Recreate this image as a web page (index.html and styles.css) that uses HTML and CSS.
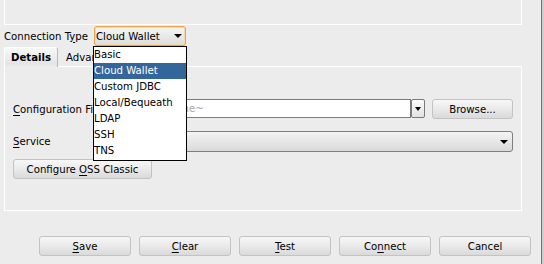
FILE: index.html
```html
<!DOCTYPE html>
<html>
<head>
<meta charset="utf-8">
<link rel="stylesheet" href="styles.css">
</head>
<body>
<div class="screen">
  <div class="main">
    <div class="top-panel"></div>
    <div class="conn-row">
      <span class="label conn-label">Connection T<u>y</u>pe</span>
      <div class="combo focus"><span class="combo-text">Cloud Wallet</span><span class="arrow"></span></div>
    </div>
    <div class="tabs">
      <div class="tab active">Details</div>
      <div class="tab">Advanced</div>
    </div>
    <div class="tab-panel">
      <div class="form-row">
        <span class="label field-label"><u>C</u>onfiguration File</span>
        <div class="file-field"><span class="ghost">Wallet file name~</span></div>
        <div class="drop-btn"><span class="arrow"></span></div>
        <div class="btn browse"><span>Browse...</span></div>
      </div>
      <div class="form-row service-row">
        <span class="label field-label"><u>S</u>ervice</span>
        <div class="combo service"><span class="combo-text"></span><span class="arrow"></span></div>
      </div>
      <div class="btn oss"><span>Configure <u>O</u>SS Classic</span></div>
    </div>
    <div class="actions">
      <div class="btn action"><span><u>S</u>ave</span></div>
      <div class="btn action"><span><u>C</u>lear</span></div>
      <div class="btn action"><span><u>T</u>est</span></div>
      <div class="btn action"><span>Co<u>n</u>nect</span></div>
      <div class="btn action"><span>Cancel</span></div>
    </div>
  </div>
  <div class="edge"></div>
  <ul class="popup">
    <li>Basic</li>
    <li class="selected">Cloud Wallet</li>
    <li>Custom JDBC</li>
    <li>Local/Bequeath</li>
    <li>LDAP</li>
    <li>SSH</li>
    <li>TNS</li>
  </ul>
</div>
</body>
</html>
```

FILE: styles.css
```css
* { box-sizing: border-box; }
html, body { margin: 0; padding: 0; }
body {
  background: #ececec;
  font-family: "DejaVu Sans Condensed", "DejaVu Sans", sans-serif;
  font-size: 11.3px;
  color: #000;
}
u { text-decoration: underline; text-underline-offset: 2px; }

.screen {
  position: relative;
  width: 544px;
  height: 264px;
  display: flex;
  overflow: hidden;
}
.main {
  width: 541px;
  flex-shrink: 0;
  padding-left: 4px;
  padding-right: 19px;
  display: flex;
  flex-direction: column;
}
.edge {
  width: 3px;
  flex-shrink: 0;
  border-left: 1px solid #3a7dc2;
  background: #cfcfcf;
}

.top-panel {
  height: 25px;
  border: 1px solid #fff;
  border-top: none;
}

.conn-row {
  margin-top: 1px;
  height: 20px;
  display: flex;
  align-items: center;
}
.conn-label { width: 90px; }

.combo {
  position: relative;
  display: flex;
  align-items: center;
  height: 20px;
  border: 1px solid #8e8f8f;
  border-radius: 3px;
  background: linear-gradient(#f6f6f6, #dcdcdc);
  padding-left: 1px;
}
.combo.focus {
  width: 92px;
  border-color: #e9a548;
  box-shadow: inset 0 0 0 1px #f7d9a6;
}
.combo-text { flex: 1; white-space: nowrap; }
.arrow {
  display: block;
  width: 0;
  height: 0;
  border-left: 4px solid transparent;
  border-right: 4px solid transparent;
  border-top: 4px solid #000;
}
.combo .arrow { margin-right: 3px; }

.tabs {
  margin-top: 1px;
  height: 20px;
  display: flex;
  position: relative;
  z-index: 1;
  margin-bottom: -1px;
}
.tab {
  height: 20px;
  padding: 0 8px;
  display: flex;
  align-items: center;
}
.tab.active {
  width: 54px;
  justify-content: center;
  font-weight: bold;
  border: 1px solid #fff;
  border-right-color: #b9b9b9;
  border-bottom: none;
  border-radius: 2px 3px 0 0;
  background: linear-gradient(#f8f8f8, #e4e4e4 85%, #ececec);
}

.tab-panel {
  height: 145px;
  border: 1px solid #fff;
  padding: 32px 8px 0 8px;
  display: flex;
  flex-direction: column;
  align-items: flex-start;
}
.form-row {
  display: flex;
  align-items: center;
  height: 20px;
  width: 100%;
}
.field-label { width: 97px; flex-shrink: 0; white-space: nowrap; }
.file-field {
  width: 302px;
  height: 19px;
  align-self: flex-start;
  background: #fff;
  border: 1px solid #7a7a7a;
  display: flex;
  align-items: center;
  padding-left: 2px;
}
.ghost { color: #a8a8a8; white-space: nowrap; }
.drop-btn {
  width: 14px;
  height: 19px;
  align-self: flex-start;
  border: 1px solid #7a7a7a;
  border-radius: 2px;
  background: linear-gradient(#fafafa, #e2e2e2);
  display: flex;
  align-items: center;
  justify-content: center;
}
.drop-btn .arrow { border-width: 4px 3px 0 3px; }

.btn {
  height: 20px;
  flex-shrink: 0;
  display: flex;
  align-items: center;
  justify-content: center;
  border: 1px solid #c3c3c3;
  border-radius: 3px;
  background: linear-gradient(#f7f7f7, #ebebeb 45%, #dadada);
  color: #000;
  white-space: nowrap;
}
.browse {
  width: 81px;
  margin-left: 7px;
}
.service-row { margin-top: 12px; height: 21px; }
.combo.service {
  flex: 1;
  height: 21px;
  border-color: #7f7f7f;
  background: linear-gradient(#f4f4f4, #d9d9d9);
}
.combo.service .arrow { margin-right: 4px; }
.oss {
  margin-top: 7px;
  width: 139px;
}

.actions {
  margin-top: 25px;
  padding-left: 35px;
  display: flex;
  gap: 8px;
}
.action { width: 92px; }

.popup {
  position: absolute;
  left: 93px;
  top: 46px;
  width: 94px;
  height: 115px;
  margin: 0;
  padding: 0;
  list-style: none;
  background: #fff;
  border: 1px solid #000;
  z-index: 5;
}
.popup li {
  height: 16px;
  line-height: 16px;
  white-space: nowrap;
}
.popup li.selected {
  background: #33679c;
  color: #fff;
}
```
